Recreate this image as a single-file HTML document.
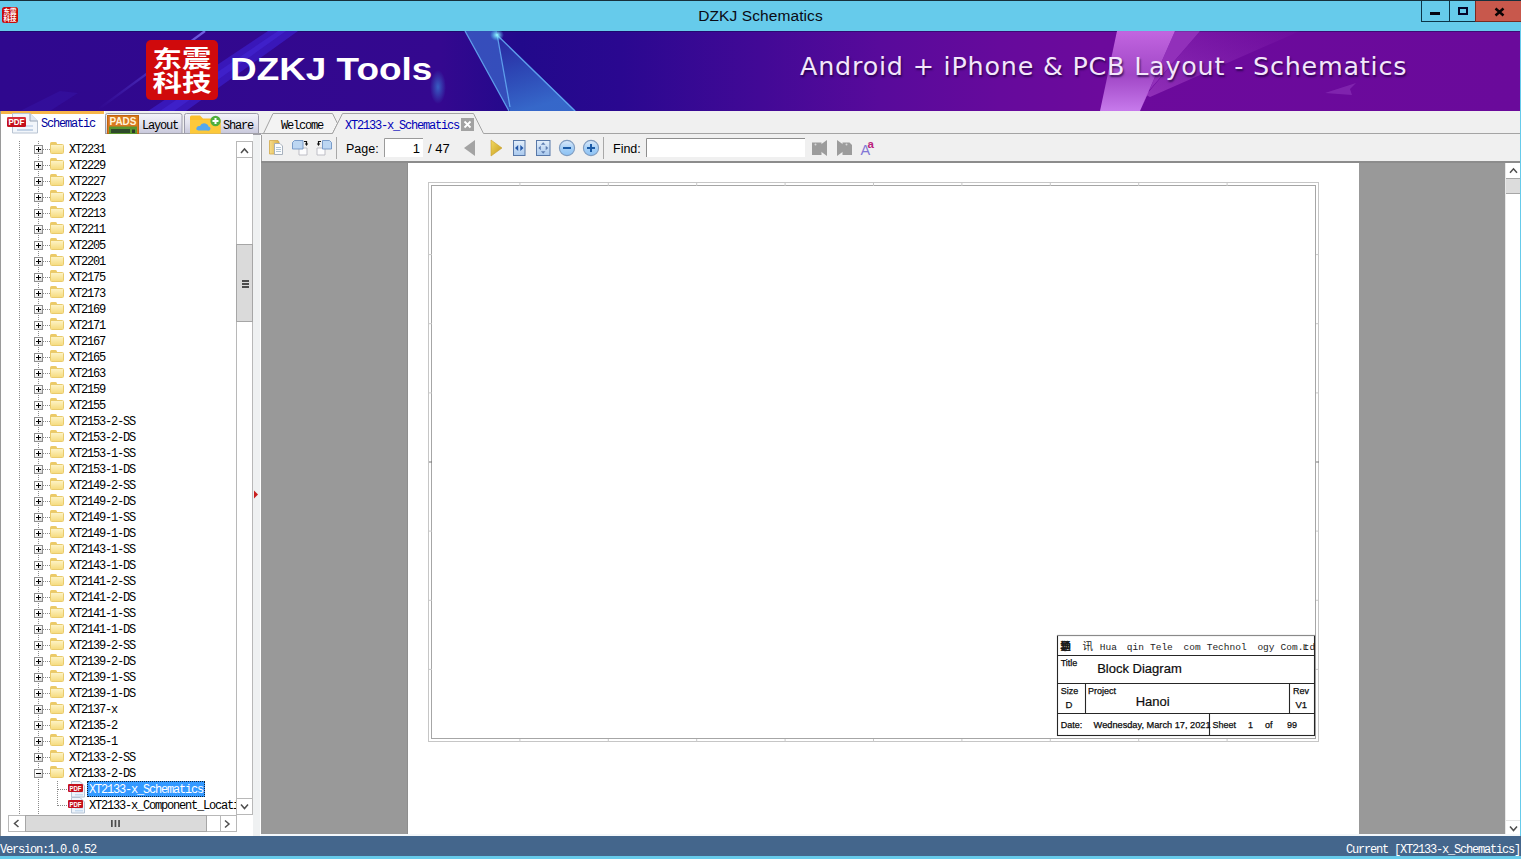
<!DOCTYPE html>
<html lang="en"><head><meta charset="utf-8"><title>DZKJ Schematics</title>
<style>
html,body{margin:0;padding:0;}
body{width:1521px;height:859px;overflow:hidden;background:#66cbeb;font-family:"Liberation Sans",sans-serif;}
#win{position:relative;width:1521px;height:859px;overflow:hidden;background:#66cbeb;}
#win *{box-sizing:border-box;}
i{display:block;position:absolute;font-style:normal;}
.abs{position:absolute;}
.mono{font-family:"Liberation Mono","Noto Sans CJK SC",monospace;font-size:12px;letter-spacing:-1.2px;line-height:16px;white-space:pre;}
/* title bar */
#titlebar{position:absolute;left:0;top:0;width:1521px;height:31px;background:#66cbeb;border-top:1px solid #16303c;}
#title{position:absolute;left:0;top:5px;width:1521px;text-align:center;font-size:15.5px;line-height:20px;color:#0a0a14;letter-spacing:0.1px;}
#appicon{position:absolute;left:2px;top:6px;width:16px;height:16px;background:#c80a0a;border-radius:2.5px;color:#fff;font:bold 6.5px/7px "Liberation Sans","Noto Sans CJK SC",sans-serif;text-align:center;overflow:hidden;padding-top:1px;letter-spacing:0;}
.wb{position:absolute;top:0;height:21px;border:1px solid #0c3448;border-top:none;}
/* banner */
#banner{position:absolute;left:0;top:31px;width:1520px;height:80px;overflow:hidden;box-shadow:inset 0 1px 0 rgba(10,10,70,.45);background:linear-gradient(90deg,#2f088e 0px,#34088f 440px,#22098b 520px,#2a0890 620px,#420996 760px,#580a9b 880px,#660a9c 1000px,#6c0a9c 1100px,#6a0a9b 1520px);}
#logo{position:absolute;left:146px;top:9px;width:72px;height:60px;background:#d00a0c;border-radius:5px;color:#fff;font-family:"Liberation Sans","Noto Sans CJK SC",sans-serif;font-weight:bold;font-size:27px;line-height:24px;text-align:center;padding-top:6px;letter-spacing:1px;}
#brand{position:absolute;left:231px;top:19px;left:230px;color:#fff;font-weight:bold;font-size:31px;line-height:40px;white-space:pre;transform-origin:0 0;transform:scaleX(1.19);}
#slogan{position:absolute;left:800px;top:15px;color:#f3e6fb;font-family:"DejaVu Sans","Liberation Sans",sans-serif;font-size:25.4px;letter-spacing:0.8px;line-height:40px;white-space:pre;text-shadow:1px 2px 2px rgba(30,0,60,.75);}
/* tab strip */
#strip{position:absolute;left:0;top:111px;width:1520px;height:24px;background:#f0f0f0;}
#leftborder{position:absolute;left:0;top:111px;width:1px;height:725px;background:#9a9a9a;}
/* tree */
#tree{position:absolute;left:1px;top:134px;width:260px;height:702px;background:#fff;overflow:hidden;}
.row{position:absolute;left:0;height:16px;width:236px;}
.vd{width:1px;background-image:linear-gradient(#8a8a8a 50%,transparent 50%);background-size:1px 2px;}
.hd{left:42px;top:8px;width:7px;height:1px;background-image:linear-gradient(90deg,#8a8a8a 50%,transparent 50%);background-size:2px 1px;}
.pm{left:33px;top:4px;width:9px;height:9px;border:1px solid #909090;background:linear-gradient(135deg,#fff 35%,#d4d4d4);}
.pm:before{content:"";position:absolute;left:1px;top:3px;width:5px;height:1px;background:#000;}
.pm.plus:after{content:"";position:absolute;left:3px;top:1px;width:1px;height:5px;background:#000;}
.fld{left:49px;top:1px;width:14px;height:12px;}
.fld:before{content:"";position:absolute;left:0;top:0;width:7px;height:4px;background:#ecca66;border-radius:1.5px 1.5px 0 0;}
.fld:after{content:"";position:absolute;left:0;top:2px;width:12px;height:8px;background:linear-gradient(#fdf3c4,#f6dc80);border:1px solid #e9cb6c;border-radius:1.5px;}
.lbl{position:absolute;left:68px;top:1px;height:16px;font-family:"Liberation Mono","Noto Sans CJK SC",monospace;font-size:12px;letter-spacing:-1.2px;line-height:16px;white-space:pre;color:#000;}
/* scrollbars */
.sb{position:absolute;background:#fff;border:1px solid #b4b4b4;}
.thumb{position:absolute;background:#dadada;border:1px solid #a6a6a6;}
.chev{position:absolute;width:7px;height:7px;border-left:2px solid #505050;border-top:2px solid #505050;}
/* toolbar */
#toolbar{position:absolute;left:261px;top:135px;width:1259px;height:26px;background:#f0f0f0;border-left:1px solid #a0a0a0;}
.tbtxt{position:absolute;font-size:12.5px;line-height:16px;color:#000;white-space:pre;}
.inp{position:absolute;top:3px;height:19px;background:#fff;border-top:1px solid #8e8e8e;border-left:1px solid #9a9a9a;}
.sep{position:absolute;top:2px;width:1px;height:22px;background:#a0a0a0;}
/* viewer */
#viewer{position:absolute;left:261px;top:161px;width:1259px;height:673px;background:#999999;border-top:2px solid #8c8c8c;overflow:hidden;}
#page{position:absolute;left:147px;top:0;width:951px;height:673px;background:#fff;box-shadow:-1px 0 0 #8e8e8e;}
/* status */
#status{position:absolute;left:0;top:836px;width:1521px;height:20px;background:#44668c;color:#fff;}

</style></head>
<body>
<div id="win">
<div id="titlebar">
<div id="appicon">东震<br>科技</div>
<div id="title">DZKJ Schematics</div>
<div class="wb" style="left:1421px;width:29px;"><i style="left:8px;top:11px;width:10px;height:3px;background:#050510"></i></div>
<div class="wb" style="left:1449px;width:27px;"><i style="left:8px;top:6px;width:10px;height:8px;border:2px solid #050528;"></i></div>
<div class="wb" style="left:1475px;width:46px;background:#c8584c;border-color:#7a2a20;border-right:none;"><svg class="abs" style="left:18px;top:6px" width="11" height="10" viewBox="0 0 11 10"><path d="M1.500 1.500 L9.500 8.500 M9.500 1.500 L1.500 8.500" stroke="#0a0405" stroke-width="2.500" fill="none"/></svg></div>
</div>
<div id="banner">
<svg class="abs" style="left:0;top:0" width="1520" height="80" viewBox="0 0 1520 80">
<defs>
<linearGradient id="gb" x1="0" y1="0" x2="0.3" y2="1"><stop offset="0" stop-color="#2c3eb0" stop-opacity=".55"/><stop offset=".5" stop-color="#2f55be" stop-opacity=".8"/><stop offset="1" stop-color="#3872d0" stop-opacity=".9"/></linearGradient>
<linearGradient id="gp" x1="0" y1="0" x2="0" y2="1"><stop offset="0" stop-color="#cc70e8" stop-opacity=".9"/><stop offset=".55" stop-color="#aa52ce" stop-opacity=".85"/><stop offset="1" stop-color="#cc80f0" stop-opacity=".95"/></linearGradient>
<linearGradient id="gp2" x1="1" y1="0" x2="0" y2="1"><stop offset="0" stop-color="#9a38c0" stop-opacity=".05"/><stop offset="1" stop-color="#b050d0" stop-opacity=".55"/></linearGradient>
<radialGradient id="glow"><stop offset="0" stop-color="#3a8fe0" stop-opacity=".8"/><stop offset="1" stop-color="#3a8fe0" stop-opacity="0"/></radialGradient>
<radialGradient id="star"><stop offset="0" stop-color="#9ff" stop-opacity="1"/><stop offset="1" stop-color="#5cf" stop-opacity="0"/></radialGradient>
</defs>
<!-- faint streaks behind logo -->
<linearGradient id="st1" gradientUnits="userSpaceOnUse" x1="100" y1="80" x2="206" y2="0"><stop offset="0" stop-color="#5a48e8" stop-opacity="0"/><stop offset=".5" stop-color="#6a5af0" stop-opacity=".45"/><stop offset="1" stop-color="#8a80ff" stop-opacity=".75"/></linearGradient>
<path d="M96 80 L205 0" stroke="url(#st1)" stroke-width="2.200" fill="none"/>
<polygon points="148,80 186,80 298,0 268,0" fill="#3d22d6" opacity=".6"/>
<polygon points="160,80 174,80 286,0 278,0" fill="#4a30e8" opacity=".35"/>
<polygon points="20,80 50,80 78,62 60,60" fill="#3a20c0" opacity=".25"/>
<!-- blue ray -->
<polygon points="465,0 497,0 497,3 510,78 509,80" fill="#3a62c8" opacity=".78"/>
<polygon points="497,3 499,5 576,80 510,80" fill="url(#gb)"/>
<path d="M465 0 L509 80 M497 3 L510 76 M498 5 L575 80" stroke="#63a7f2" stroke-width="1.3" fill="none" opacity=".9"/>
<ellipse cx="497" cy="4" rx="7" ry="6" fill="url(#star)"/>
<ellipse cx="438" cy="56" rx="8" ry="17" fill="url(#glow)" opacity=".8"/>
<!-- pink ray -->
<polygon points="1117,0 1175,0 1140,80 1100,80" fill="url(#gp)"/>
<polygon points="1175,0 1200,0 1147,62 1142,76" fill="#c060e0" opacity=".45"/>
<polygon points="1200,0 1300,0 1150,66 1146,64" fill="url(#gp2)"/>
<polygon points="1325,62 1356,52 1350,58 1352,64" fill="#b060d8" opacity=".3"/>
</svg>
<div id="logo"></div>
<svg class="abs" style="left:146px;top:9px" width="72" height="60" viewBox="146 40 72 60"><g font-family="Liberation Sans, Noto Sans CJK SC, sans-serif" font-weight="bold" font-size="23" fill="#fff"><text x="152.500" y="67" textLength="59" lengthAdjust="spacingAndGlyphs">东震</text><text x="152.500" y="91" textLength="59" lengthAdjust="spacingAndGlyphs">科技</text></g></svg>
<div id="brand">DZKJ Tools</div>
<div id="slogan">Android + iPhone &amp; PCB Layout - Schematics</div>
</div>
<div id="strip"></div>
<div id="leftborder"></div>

<svg class="abs" style="left:0;top:111px" width="1520" height="24" viewBox="0 0 1520 24">
<defs>
<linearGradient id="tg" x1="0" y1="0" x2="0" y2="1"><stop offset="0" stop-color="#f4f4fa"/><stop offset=".5" stop-color="#e2e2ee"/><stop offset="1" stop-color="#c6c6da"/></linearGradient>
</defs>
<!-- active left tab -->
<rect x="1" y="0" width="104" height="24" fill="#fff"/>
<rect x="1" y="0" width="103" height="3" fill="#f7b548"/>
<!-- Layout tab -->
<path d="M105.5 23 V4.5 Q105.5 2.5 107.5 2.5 H180 Q182 2.5 182 4.5 V23 Z" fill="url(#tg)" stroke="#9c9caa" stroke-width="1"/>
<!-- Share tab -->
<path d="M184.500 23 V4.5 Q184.500 2.5 186.5 2.5 H256.500 Q258.500 2.5 258.500 4.5 V23 Z" fill="url(#tg)" stroke="#9c9caa" stroke-width="1"/>
<path d="M105 22.500 H261.500" stroke="#a0a0a8" stroke-width="1"/>
<!-- right tabs -->
<path d="M263.500 22.500 L273 2.500 H332.500 L337.500 12.500 L332.500 22.500 Z" fill="#f3f3f3" stroke="#a4a4a4" stroke-width="1"/>
<path d="M332.500 22.500 L342.500 2.500 H473.500 L483.500 22.500" fill="#f0f0f0" stroke="#a4a4a4" stroke-width="1"/>
<path d="M483.500 22.500 H1520" stroke="#a4a4a4" stroke-width="1"/>
<path d="M261.500 22.500 H264" stroke="#a4a4a4" stroke-width="1"/>
<!-- close box -->
<rect x="461" y="7" width="13" height="13" fill="#a2a2a2"/>
<path d="M464.500 10.500 L470.500 16.500 M470.500 10.500 L464.500 16.500" stroke="#fff" stroke-width="1.8" fill="none"/>
<!-- pdf icon -->
<g>
<path d="M12.500 2.500 H30 L37.500 10 V22 H12.500 Z" fill="#f2f6fb" stroke="#b9c4d2" stroke-width="1"/>
<path d="M30 2.500 V10 H37.500" fill="#dfe7f1" stroke="#9aa6b6" stroke-width="1"/>
<rect x="17" y="14" width="16" height="2" fill="#cfdced"/><rect x="17" y="18" width="16" height="2" fill="#c4d3e6"/>
<rect x="7" y="6" width="19" height="10" rx="1.5" fill="#c4101c"/>
<rect x="7" y="6" width="19" height="4" rx="1.500" fill="#dd3a44" opacity=".7"/>
<text x="16.500" y="14.300" text-anchor="middle" font-family="Liberation Sans, sans-serif" font-weight="bold" font-size="8.500" fill="#fff" textLength="16" lengthAdjust="spacingAndGlyphs">PDF</text>
</g>
<!-- PADS icon -->
<g>
<rect x="107.500" y="4.500" width="31" height="18" fill="#d8781e" stroke="#c0640e" stroke-width="1"/>
<rect x="109" y="15.500" width="28" height="7.500" fill="#5a962e"/>
<rect x="111" y="18" width="19" height="4" fill="#2e4a2a"/><rect x="132" y="18.500" width="3" height="3.500" fill="#2a3a28"/>
<text x="123" y="13.500" text-anchor="middle" font-family="Liberation Sans, sans-serif" font-weight="bold" font-size="10.500" fill="#fff3d8" textLength="27" lengthAdjust="spacingAndGlyphs">PADS</text>
</g>
<!-- Share icon -->
<g>
<path d="M190 22.500 V6 Q190 4.500 191.500 4.500 H200 L203 7.500 H219 Q220.500 7.500 220.500 9 V22.500 Z" fill="#fbbf2c"/>
<path d="M190 22.500 V9 H220.500 V22.500 Z" fill="#fdc93a"/>
<path d="M198.500 19.500 Q195 19 197 16 Q198 14.500 200 15 Q201.500 11.500 205.500 12.500 Q208.500 13.500 208.500 15.500 Q211.500 16.500 210 19 Q209 20 207 19.500 Z" fill="#55a8ee"/>
<circle cx="215.500" cy="10" r="5.200" fill="#4fae3c"/>
<path d="M212.500 10 H218.500 M215.500 7 V13" stroke="#fff" stroke-width="2"/>
</g>
</svg>
<span class="abs mono" style="left:41px;top:116px;color:#00009c">Schematic</span>
<span class="abs mono" style="left:142px;top:118px;color:#000">Layout</span>
<span class="abs mono" style="left:223px;top:118px;color:#000">Share</span>
<span class="abs mono" style="left:281px;top:118px;color:#000">Welcome</span>
<span class="abs mono" style="left:345px;top:118px;color:#0000b8">XT2133-x_Schematics</span>

<div id="tree">
<i class="vd" style="left:18px;top:7px;height:674px"></i>
<i class="vd" style="left:37px;top:7px;height:674px"></i>
<div class="row" style="top:7px"><i class="pm plus"></i><i class="hd"></i><i class="fld"></i><span class="lbl">XT2231</span></div>
<div class="row" style="top:23px"><i class="pm plus"></i><i class="hd"></i><i class="fld"></i><span class="lbl">XT2229</span></div>
<div class="row" style="top:39px"><i class="pm plus"></i><i class="hd"></i><i class="fld"></i><span class="lbl">XT2227</span></div>
<div class="row" style="top:55px"><i class="pm plus"></i><i class="hd"></i><i class="fld"></i><span class="lbl">XT2223</span></div>
<div class="row" style="top:71px"><i class="pm plus"></i><i class="hd"></i><i class="fld"></i><span class="lbl">XT2213</span></div>
<div class="row" style="top:87px"><i class="pm plus"></i><i class="hd"></i><i class="fld"></i><span class="lbl">XT2211</span></div>
<div class="row" style="top:103px"><i class="pm plus"></i><i class="hd"></i><i class="fld"></i><span class="lbl">XT2205</span></div>
<div class="row" style="top:119px"><i class="pm plus"></i><i class="hd"></i><i class="fld"></i><span class="lbl">XT2201</span></div>
<div class="row" style="top:135px"><i class="pm plus"></i><i class="hd"></i><i class="fld"></i><span class="lbl">XT2175</span></div>
<div class="row" style="top:151px"><i class="pm plus"></i><i class="hd"></i><i class="fld"></i><span class="lbl">XT2173</span></div>
<div class="row" style="top:167px"><i class="pm plus"></i><i class="hd"></i><i class="fld"></i><span class="lbl">XT2169</span></div>
<div class="row" style="top:183px"><i class="pm plus"></i><i class="hd"></i><i class="fld"></i><span class="lbl">XT2171</span></div>
<div class="row" style="top:199px"><i class="pm plus"></i><i class="hd"></i><i class="fld"></i><span class="lbl">XT2167</span></div>
<div class="row" style="top:215px"><i class="pm plus"></i><i class="hd"></i><i class="fld"></i><span class="lbl">XT2165</span></div>
<div class="row" style="top:231px"><i class="pm plus"></i><i class="hd"></i><i class="fld"></i><span class="lbl">XT2163</span></div>
<div class="row" style="top:247px"><i class="pm plus"></i><i class="hd"></i><i class="fld"></i><span class="lbl">XT2159</span></div>
<div class="row" style="top:263px"><i class="pm plus"></i><i class="hd"></i><i class="fld"></i><span class="lbl">XT2155</span></div>
<div class="row" style="top:279px"><i class="pm plus"></i><i class="hd"></i><i class="fld"></i><span class="lbl">XT2153-2-SS</span></div>
<div class="row" style="top:295px"><i class="pm plus"></i><i class="hd"></i><i class="fld"></i><span class="lbl">XT2153-2-DS</span></div>
<div class="row" style="top:311px"><i class="pm plus"></i><i class="hd"></i><i class="fld"></i><span class="lbl">XT2153-1-SS</span></div>
<div class="row" style="top:327px"><i class="pm plus"></i><i class="hd"></i><i class="fld"></i><span class="lbl">XT2153-1-DS</span></div>
<div class="row" style="top:343px"><i class="pm plus"></i><i class="hd"></i><i class="fld"></i><span class="lbl">XT2149-2-SS</span></div>
<div class="row" style="top:359px"><i class="pm plus"></i><i class="hd"></i><i class="fld"></i><span class="lbl">XT2149-2-DS</span></div>
<div class="row" style="top:375px"><i class="pm plus"></i><i class="hd"></i><i class="fld"></i><span class="lbl">XT2149-1-SS</span></div>
<div class="row" style="top:391px"><i class="pm plus"></i><i class="hd"></i><i class="fld"></i><span class="lbl">XT2149-1-DS</span></div>
<div class="row" style="top:407px"><i class="pm plus"></i><i class="hd"></i><i class="fld"></i><span class="lbl">XT2143-1-SS</span></div>
<div class="row" style="top:423px"><i class="pm plus"></i><i class="hd"></i><i class="fld"></i><span class="lbl">XT2143-1-DS</span></div>
<div class="row" style="top:439px"><i class="pm plus"></i><i class="hd"></i><i class="fld"></i><span class="lbl">XT2141-2-SS</span></div>
<div class="row" style="top:455px"><i class="pm plus"></i><i class="hd"></i><i class="fld"></i><span class="lbl">XT2141-2-DS</span></div>
<div class="row" style="top:471px"><i class="pm plus"></i><i class="hd"></i><i class="fld"></i><span class="lbl">XT2141-1-SS</span></div>
<div class="row" style="top:487px"><i class="pm plus"></i><i class="hd"></i><i class="fld"></i><span class="lbl">XT2141-1-DS</span></div>
<div class="row" style="top:503px"><i class="pm plus"></i><i class="hd"></i><i class="fld"></i><span class="lbl">XT2139-2-SS</span></div>
<div class="row" style="top:519px"><i class="pm plus"></i><i class="hd"></i><i class="fld"></i><span class="lbl">XT2139-2-DS</span></div>
<div class="row" style="top:535px"><i class="pm plus"></i><i class="hd"></i><i class="fld"></i><span class="lbl">XT2139-1-SS</span></div>
<div class="row" style="top:551px"><i class="pm plus"></i><i class="hd"></i><i class="fld"></i><span class="lbl">XT2139-1-DS</span></div>
<div class="row" style="top:567px"><i class="pm plus"></i><i class="hd"></i><i class="fld"></i><span class="lbl">XT2137-x</span></div>
<div class="row" style="top:583px"><i class="pm plus"></i><i class="hd"></i><i class="fld"></i><span class="lbl">XT2135-2</span></div>
<div class="row" style="top:599px"><i class="pm plus"></i><i class="hd"></i><i class="fld"></i><span class="lbl">XT2135-1</span></div>
<div class="row" style="top:615px"><i class="pm plus"></i><i class="hd"></i><i class="fld"></i><span class="lbl">XT2133-2-SS</span></div>
<div class="row" style="top:631px"><i class="pm minus"></i><i class="hd"></i><i class="fld"></i><span class="lbl">XT2133-2-DS</span></div>
<!-- child rows -->
<i class="vd" style="left:56px;top:647px;height:25px"></i>
<i class="hd" style="left:57px;top:655px;width:10px"></i>
<i class="hd" style="left:57px;top:671px;width:10px"></i>
<svg class="abs" style="left:66px;top:646px" width="20" height="34" viewBox="0 0 20 34">
<g>
<path d="M4.500 1.500 H13 L17.500 6 V17 H4.500 Z" fill="#eef4fb" stroke="#b4c3d4" stroke-width="1"/>
<rect x="8" y="11" width="8" height="1.500" fill="#b9d3ee"/><rect x="8" y="14" width="8" height="1.500" fill="#c6dbf0"/>
<rect x="1" y="4" width="15" height="8" rx="1" fill="#c4111d"/>
<text x="8.500" y="10.600" text-anchor="middle" font-family="Liberation Sans, sans-serif" font-weight="bold" font-size="6.500" fill="#fff" textLength="12" lengthAdjust="spacingAndGlyphs">PDF</text>
</g>
<g transform="translate(0,16)">
<path d="M4.500 1.500 H13 L17.500 6 V17 H4.500 Z" fill="#eef4fb" stroke="#b4c3d4" stroke-width="1"/>
<rect x="8" y="11" width="8" height="1.500" fill="#b9d3ee"/><rect x="8" y="14" width="8" height="1.500" fill="#c6dbf0"/>
<rect x="1" y="4" width="15" height="8" rx="1" fill="#c4111d"/>
<text x="8.500" y="10.600" text-anchor="middle" font-family="Liberation Sans, sans-serif" font-weight="bold" font-size="6.500" fill="#fff" textLength="12" lengthAdjust="spacingAndGlyphs">PDF</text>
</g>
</svg>
<div class="abs" style="left:86px;top:647px;width:118px;height:16px;background:#3399ff;border:1px dotted #10243a;"></div>
<span class="lbl" style="left:88px;top:648px;color:#fff">XT2133-x_Schematics</span>
<span class="lbl" style="left:88px;top:664px;">XT2133-x_Component_Location</span>
<!-- vertical scrollbar -->
<div class="sb" style="left:235px;top:7px;width:17px;height:674px;border-color:#b8b8b8;">
<i style="left:0;top:15px;width:15px;height:1px;background:#b8b8b8"></i>
<i class="thumb" style="left:-1px;top:102px;width:17px;height:78px;"></i>
<i style="left:5px;top:138px;width:7px;height:2px;background:#4c4c4c"></i>
<i style="left:5px;top:141px;width:7px;height:2px;background:#4c4c4c"></i>
<i style="left:5px;top:144px;width:7px;height:2px;background:#4c4c4c"></i>
<i style="left:0;top:656px;width:15px;height:1px;background:#b8b8b8"></i>
</div>
<!-- horizontal scrollbar -->
<div class="sb" style="left:7px;top:681px;width:229px;height:17px;border-color:#b8b8b8;">
<i class="thumb" style="left:16px;top:-1px;width:182px;height:17px;"></i>
<i style="left:211px;top:-1px;width:1px;height:17px;background:#b8b8b8"></i>
</div>
<!-- splitter -->
<i style="left:252px;top:0;width:7px;height:702px;background:#eff1f2"></i>
<i style="left:252px;top:0;width:8px;height:1px;background:#a0a0a8"></i>
<svg class="abs" style="left:252px;top:356px" width="6" height="9" viewBox="0 0 6 9"><path d="M1 0.500 L5 4.500 L1 8.500 Z" fill="#c81e1e"/></svg>

</div>
<div id="toolbar"></div>
<svg class="abs" style="left:261px;top:135px" width="1259" height="26" viewBox="261 135 1259 26">
<defs>
<linearGradient id="fy" x1="0" y1="0" x2="1" y2="0"><stop offset="0" stop-color="#f6dc8a"/><stop offset="1" stop-color="#d9b04a"/></linearGradient>
<linearGradient id="bl" x1="0" y1="0" x2="0" y2="1"><stop offset="0" stop-color="#e4effa"/><stop offset="1" stop-color="#a9c9ee"/></linearGradient>
<linearGradient id="bl2" x1="0" y1="0" x2="0" y2="1"><stop offset="0" stop-color="#dbeafa"/><stop offset=".5" stop-color="#a8d0f6"/><stop offset="1" stop-color="#8cc2f4"/></linearGradient>
<linearGradient id="gold" x1="0" y1="0" x2="1" y2="1"><stop offset="0" stop-color="#f3da62"/><stop offset="1" stop-color="#c49a1c"/></linearGradient>
</defs>
<!-- open/folder-page icon -->
<path d="M269.500 140.500 H278 L279 142 V154 H269.500 Z" fill="url(#fy)" stroke="#d2a84a" stroke-width=".8"/>
<path d="M274.500 143.500 H280 L282.500 146 V154.500 H274.500 Z" fill="#fbfcfe" stroke="#9fa9b6" stroke-width=".9"/>
<path d="M276 147.500 H281 M276 149.500 H281 M276 151.500 H281" stroke="#a8bfd0" stroke-width=".9"/>
<!-- rotate right -->
<path d="M299 148 H307 V155 H299 Z" fill="#fcfcfd" stroke="#b8b8c0" stroke-width=".9"/>
<path d="M292.500 142.500 L294.500 140.500 H303 V149 H292.500 Z" fill="#bcd6f2" stroke="#6f94c4" stroke-width=".9"/>
<path d="M304 141.500 H306.500 V144" stroke="#111" stroke-width="1.2" fill="none"/><path d="M304.800 143.500 H308.200 L306.500 146 Z" fill="#111"/>
<!-- rotate left -->
<path d="M317 148 H325 V155 H317 Z" fill="#fcfcfd" stroke="#b8b8c0" stroke-width=".9"/>
<path d="M322.500 140.500 H329.500 L331.500 142.500 V149 H322.500 Z" fill="#bcd6f2" stroke="#6f94c4" stroke-width=".9"/>
<path d="M321 141.500 H318.500 V144" stroke="#111" stroke-width="1.2" fill="none"/><path d="M316.800 143.500 H320.200 L318.500 146 Z" fill="#111"/>
<rect x="336" y="137" width="1" height="22" fill="#a8a8a8"/>
<!-- page box -->
<rect x="384" y="138" width="39" height="19" fill="#fff"/>
<path d="M384.500 157 V138.500 H423" stroke="#9a9a9a" stroke-width="1" fill="none"/>
<!-- prev/next -->
<path d="M464 148 L475 140 V156 Z" fill="#a3a3a3"/>
<path d="M491 140 L502 148 L491 156 Z" fill="url(#gold)" stroke="#c9a030" stroke-width=".6"/>
<!-- fit width -->
<rect x="513.500" y="140.500" width="11.500" height="15" fill="url(#bl)" stroke="#5878a8" stroke-width="1"/>
<path d="M515 148 L518.200 145 V151 Z M523.500 148 L520.300 145 V151 Z" fill="#2458a8"/>
<!-- fit page -->
<rect x="536.500" y="140.500" width="13.500" height="15" fill="url(#bl)" stroke="#5878a8" stroke-width="1"/>
<path d="M543.200 142.300 L545.500 144.800 H540.900 Z M543.200 153.700 L545.500 151.200 H540.900 Z M538.300 148 L540.800 145.700 V150.300 Z M548.200 148 L545.700 145.700 V150.300 Z" fill="#5e7eb2"/>
<!-- zoom out / in -->
<circle cx="567" cy="148" r="7.600" fill="url(#bl2)" stroke="#7f9cc0" stroke-width="1.100"/>
<rect x="563" y="147" width="8" height="2" fill="#1a5aa6"/>
<circle cx="591" cy="148" r="7.600" fill="url(#bl2)" stroke="#7f9cc0" stroke-width="1.100"/>
<rect x="587" y="147" width="8" height="2" fill="#1a5aa6"/><rect x="590" y="144" width="2" height="8" fill="#1a5aa6"/>
<rect x="603" y="137" width="1" height="22" fill="#a8a8a8"/>
<!-- find box -->
<rect x="646" y="138" width="159" height="19" fill="#fff"/>
<path d="M646.500 157 V138.500 H805" stroke="#8e8e8e" stroke-width="1" fill="none"/>
<!-- find prev / next -->
<path d="M812 142.500 H821.500 V155 H812 Z" fill="#9c9c9c"/><path d="M827 140 V156 L816 148 Z" fill="#9c9c9c"/>
<circle cx="815.500" cy="144.500" r="1" fill="#d8d8d8"/>
<path d="M842.500 142.500 H849.500 L852 145 V155 H842.500 Z" fill="#9c9c9c"/><path d="M837 140 V156 L848 148 Z" fill="#9c9c9c"/>
<circle cx="846.500" cy="144.500" r="1" fill="#d8d8d8"/>
<!-- Aa -->
<text x="860.500" y="155" font-family="Liberation Sans, sans-serif" font-size="14.500" fill="#8377d6">A</text>
<text x="867.600" y="147.800" font-family="Liberation Sans, sans-serif" font-weight="bold" font-size="11.500" fill="#bb1f7c">a</text>
</svg>
<span class="tbtxt" style="left:346px;top:141px">Page:</span>
<span class="tbtxt" style="left:384px;top:141px;width:36px;text-align:right;font-size:13px">1</span>
<span class="tbtxt" style="left:428px;top:141px;font-size:13px">/ 47</span>
<span class="tbtxt" style="left:613px;top:141px">Find:</span>

<div id="viewer">
<div id="page">
<svg class="abs" style="left:0;top:0" width="951" height="671" viewBox="408 163 951 671">
<g fill="none" stroke-width="1">
<rect x="428.500" y="182.500" width="890" height="559" stroke="#c6c6c6"/>
<rect x="431.500" y="185.500" width="884" height="553" stroke="#a6a6a6"/>
<path stroke="#c9c9c9" d="M519.900 183 v3 M608.300 183 v3 M696.700 183 v3 M785.100 183 v3 M873.500 183 v3 M961.900 183 v3 M1050.300 183 v3 M1138.700 183 v3 M1227.100 183 v3 M519.900 739 v3 M608.300 739 v3 M696.700 739 v3 M785.100 739 v3 M873.500 739 v3 M961.900 739 v3 M1050.300 739 v3 M1138.700 739 v3 M1227.100 739 v3"/>
<path stroke="#c9c9c9" d="M429 254.600 h3 M429 323.700 h3 M429 392.900 h3 M429 531.100 h3 M429 600.300 h3 M429 669.400 h3 M1316 254.600 h3 M1316 323.700 h3 M1316 392.900 h3 M1316 531.100 h3 M1316 600.300 h3 M1316 669.400 h3"/>
<path stroke="#777" d="M429 462 h3 M1316 462 h3"/>
</g>
<!-- title block -->
<g fill="none" stroke="#262626" stroke-width="1.100">
<rect x="1057.500" y="635.500" width="257" height="100"/>
<path d="M1057.500 655.500 H1314.500 M1057.500 683.500 H1314.500 M1057.500 713.500 H1314.500 M1085.500 683.500 V713.500 M1289.500 683.500 V713.500 M1209.500 713.500 V735.500"/>
</g>
<path d="M1057 635.500 H1315" stroke="#8a8a8a" stroke-width="1.200"/>
<g font-family="Liberation Mono, Noto Sans CJK SC, monospace" font-size="9.500" fill="#1c1c1c">
<text x="1060" y="649.500" font-size="10" font-weight="bold">华</text><text x="1060.500" y="649.500" font-size="10" font-weight="bold">勤</text><text x="1061" y="649.500" font-size="10" font-weight="bold">通</text>
<text x="1082.500" y="650" font-size="10.500">讯</text>
<text x="1099.800" y="649.600">Hua</text><text x="1126.800" y="649.600">qin</text><text x="1150" y="649.600">Tele</text><text x="1183.600" y="649.600">com</text><text x="1206.700" y="649.600">Technol</text><text x="1257.400" y="649.600">ogy</text><text x="1280.600" y="649.600">Com.</text><text x="1302.500" y="649.600">L</text><text x="1303.700" y="649.600">td</text>
</g>
<g font-family="Liberation Sans, sans-serif" fill="#0c0c0c" font-size="9" stroke="#0c0c0c" stroke-width=".25">
<text x="1060.700" y="666.400">Title</text>
<text x="1097.200" y="672.900" font-size="13" stroke-width=".2">Block Diagram</text>
<text x="1060.700" y="694">Size</text>
<text x="1065.600" y="708.200" font-size="9.500">D</text>
<text x="1088" y="694">Project</text>
<text x="1135.700" y="705.800" font-size="13" stroke-width=".2">Hanoi</text>
<text x="1293" y="694">Rev</text>
<text x="1295.400" y="708.200" font-size="9.500">V1</text>
<text x="1060.700" y="727.500">Date:</text>
<text x="1093.600" y="727.500" textLength="117" lengthAdjust="spacingAndGlyphs">Wednesday, March 17, 2021</text>
<text x="1212.600" y="727.500">Sheet</text>
<text x="1248" y="727.500">1</text>
<text x="1264.900" y="727.500">of</text>
<text x="1287" y="727.500">99</text>
</g>
</svg>
</div>
<div class="sb" style="left:1244px;top:-1px;width:16px;height:673px;border-color:#fff;border-left-color:#e8e8e8;">
<i style="left:0;top:657px;width:15px;height:1px;background:#e4e4e4"></i>
<i class="thumb" style="left:0;top:15px;width:15px;height:16px;border-left:none;border-right:none;background:#dcdcdc"></i>
</div>
</div>
<div class="abs" style="left:261px;top:834px;width:1259px;height:2px;background:#f4f8fb"></div>
<div id="status"><span class="abs mono" style="left:0;top:6px;color:#fff">Version:1.0.0.52</span><span class="abs mono" style="right:1px;top:6px;color:#fff">Current [XT2133-x_Schematics]</span></div>
<svg class="abs" style="left:0;top:0;pointer-events:none" width="1521" height="859" viewBox="0 0 1521 859"><g fill="none" stroke="#4e4e4e" stroke-width="1.500">
<path d="M241 153 L244.500 149 L248 153"/>
<path d="M241 804.500 L244.500 808.500 L248 804.500"/>
<path d="M1510 172.800 L1513.500 168.800 L1517 172.800"/>
<path d="M1510 826.500 L1513.500 830.500 L1517 826.500"/>
<path d="M18.500 820 L14.500 823.500 L18.500 827"/>
<path d="M225 820.500 L229 824 L225 827.500"/>
</g><g fill="#4c4c4c"><rect x="111" y="820" width="1.700" height="7"/><rect x="114.600" y="820" width="1.700" height="7"/><rect x="118.200" y="820" width="1.700" height="7"/></g></svg>

</div>
</body></html>
